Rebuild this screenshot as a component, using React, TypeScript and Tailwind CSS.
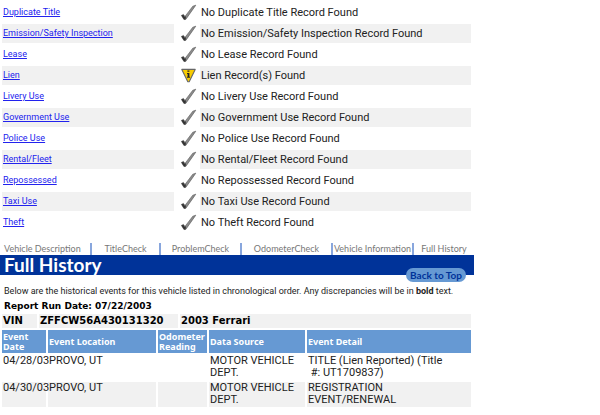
const checks = [
  { name: 'Duplicate Title', result: 'No Duplicate Title Record Found' },
  { name: 'Emission/Safety Inspection', result: 'No Emission/Safety Inspection Record Found' },
  { name: 'Lease', result: 'No Lease Record Found' },
  { name: 'Lien', result: 'Lien Record(s) Found', alert: true },
  { name: 'Livery Use', result: 'No Livery Use Record Found' },
  { name: 'Government Use', result: 'No Government Use Record Found' },
  { name: 'Police Use', result: 'No Police Use Record Found' },
  { name: 'Rental/Fleet', result: 'No Rental/Fleet Record Found' },
  { name: 'Repossessed', result: 'No Repossessed Record Found' },
  { name: 'Taxi Use', result: 'No Taxi Use Record Found' },
  { name: 'Theft', result: 'No Theft Record Found' },
];

const events = [
  { date: '04/28/03', place: 'PROVO, UT', source: ['MOTOR VEHICLE', 'DEPT.'], detail: ['TITLE (Lien Reported) (Title', '\u00a0#: UT1709837)'] },
  { date: '04/30/03', place: 'PROVO, UT', source: ['MOTOR VEHICLE', 'DEPT.'], detail: ['REGISTRATION', 'EVENT/RENEWAL'] },
];

const slug = (name: string) => '#' + name.toLowerCase().replace(/[^a-z]+/g, '-');

function CheckIcon() {
  return (
    <svg viewBox="0 0 17 17" className="block h-[17px] w-[17px]" aria-hidden="true">
      <path d="M1.4 11.4 L3.4 10.4 L5 12.4 L12.8 2.2 L15.8 1.2 L5.8 15.4 L4 15.6 Z" fill="#8c8c8c" stroke="#555" strokeWidth="0.6" />
      <path d="M1.4 11.4 L3.4 10.8 L4.6 12.8 L6 12.2 L5.6 15.2 L4 15.4 Z" fill="#333" />
    </svg>
  );
}

function AlertIcon() {
  return (
    <svg viewBox="0 0 17 17" className="block h-[17px] w-[17px]" aria-hidden="true">
      <path d="M1.8 2.4 H15.2 L9.2 14.8 H7.8 Z" fill="#f8cc00" stroke="#666" strokeWidth="1.1" strokeLinejoin="round" />
      <path d="M7.4 3.4 H9.4 V4.8 H7.4 Z M7 6 H9.4 V9.8 H10 V10.8 H7 V9.8 H7.6 V7 H7 Z" fill="#222" />
    </svg>
  );
}

function CheckTable() {
  return (
    <table className="w-full table-fixed border-separate border-spacing-x-0 border-spacing-y-[2px] pt-px pr-[3px] pl-[2px]">
      <colgroup>
        <col className="w-[172px]" />
        <col className="w-[26px]" />
        <col />
      </colgroup>
      <tbody>
        {checks.map((c, i) => {
          const bg = i % 2 ? 'bg-[#f1f1f1]' : '';
          return (
            <tr key={c.name} className="h-[19px]">
              <td className={`p-0 pl-px text-[9px] leading-[19px] ${bg}`}>
                <a href={slug(c.name)} className="text-[#2222ee] underline">{c.name}</a>
              </td>
              <td className="p-0 pl-[6px]">{c.alert ? <AlertIcon /> : <CheckIcon />}</td>
              <td className={`p-0 pl-px text-[11px] leading-[17px] ${bg}`}>{c.result}</td>
            </tr>
          );
        })}
      </tbody>
    </table>
  );
}

function Nav() {
  const item = 'border-r-2 border-[#88a6dd] last:border-r-0';
  return (
    <nav className="grid grid-cols-[92fr_69fr_81fr_91fr_81fr_60fr] text-center font-[Lato,sans-serif] text-[9px] leading-[12px] whitespace-nowrap text-[#777]">
      <a href="#description" className={`pl-1 text-left ${item}`}>Vehicle Description</a>
      <a href="#title" className={item}>TitleCheck</a>
      <a href="#problem" className={item}>ProblemCheck</a>
      <a href="#odometer" className={item}>OdometerCheck</a>
      <a href="#information" className={item}>Vehicle Information</a>
      <a href="#history" className={item}>Full History</a>
    </nav>
  );
}

function EventTable() {
  const th = 'h-[23px] bg-[#6699d3] p-0 pl-px text-left align-middle';
  return (
    <table className="w-full table-fixed border-separate border-spacing-x-[2px] border-spacing-y-[2px] pr-px">
      <colgroup>
        <col className="w-[44px]" />
        <col className="w-[108px]" />
        <col className="w-[49px]" />
        <col className="w-[96px]" />
        <col />
      </colgroup>
      <thead className="font-['Noto_Sans',sans-serif] text-[9px] leading-[10px] text-white">
        <tr>
          <th className={th}>Event Date</th>
          <th className={th}>Event Location</th>
          <th className={th}>Odometer Reading</th>
          <th className={th}>Data Source</th>
          <th className={th}>Event Detail</th>
        </tr>
      </thead>
      <tbody className="text-[11px] leading-[12px]">
        {events.map((e, i) => {
          const td = i % 2 ? 'bg-[#f1f1f1] p-0 pl-px pb-px align-top' : 'p-0 pl-px pb-px align-top';
          return (
            <tr key={e.date}>
              <td className={`whitespace-nowrap ${td}`}>{e.date}</td>
              <td className={td}>{e.place}</td>
              <td className={td}></td>
              <td className={td}>{e.source.map((l) => <div key={l}>{l}</div>)}</td>
              <td className={td}>{e.detail.map((l) => <div key={l}>{l}</div>)}</td>
            </tr>
          );
        })}
      </tbody>
    </table>
  );
}

export default function App() {
  return (
    <main className="max-w-[474px] bg-white font-[Roboto,Arial,sans-serif] text-[#222]">
      <CheckTable />

      <div className="pt-[9px]">
        <Nav />
      </div>

      {/* Section banner */}
      <header className="relative h-5 bg-[#003399] pl-1">
        <h2 className="font-[Lato,sans-serif] text-[19px] leading-5 font-bold text-white">Full History</h2>
        <a href="#top" className="absolute right-2 bottom-[-7px] rounded-full bg-[#6699d3] px-1 font-[Lato,sans-serif] text-[10px] leading-[14px] font-bold text-[#003399]">
          Back to Top
        </a>
      </header>

      <div className="pt-[10px] pl-1">
        <p className="text-[9px] leading-[12px]">
          Below are the historical events for this vehicle listed in chronological order. Any discrepancies will be in <b>bold</b> text.
        </p>
        <p className="pt-1 font-['DejaVu_Sans',sans-serif] text-[9px] leading-[11px] font-bold text-black">Report Run Date: 07/22/2003</p>
      </div>

      <div className="flex gap-[2px] pt-[2px] pr-[3px] pl-[2px] font-['DejaVu_Sans',sans-serif] text-[10px] leading-[14px] font-bold text-black">
        <div className="w-[35px] bg-[#f1f1f1] pl-px">VIN</div>
        <div className="w-[139px] bg-[#f1f1f1] pl-px">ZFFCW56A430131320</div>
        <div className="flex-1 bg-[#f1f1f1] pl-px">2003 Ferrari</div>
      </div>

      <EventTable />
    </main>
  );
}
